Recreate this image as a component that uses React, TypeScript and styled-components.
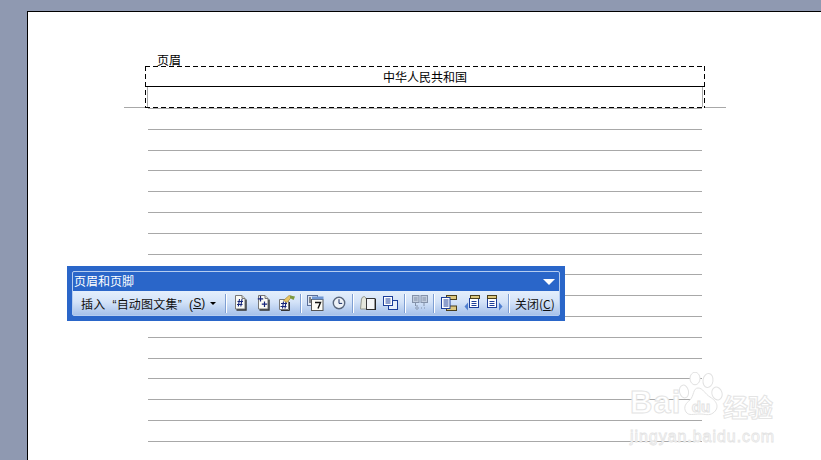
import React from "react";
import styled, { createGlobalStyle } from "styled-components";

const GlobalStyle = createGlobalStyle`
  html, body {
    margin: 0;
    padding: 0;
    background: #8f99b1;
    overflow: hidden;
  }
`;

const Screen = styled.div`
  position: relative;
  width: 821px;
  height: 460px;
  padding-top: 11px;
  box-sizing: border-box;
  overflow: hidden;
  font-family: "Noto Sans CJK SC", "Liberation Sans", sans-serif;
`;

const Page = styled.div`
  margin-left: 27px;
  height: 449px;
  background: #fff;
  border-top: 1px solid #000;
  border-left: 1px solid #000;
  box-sizing: border-box;
  padding: 54px 0 0 117px;
  overflow: hidden;
`;

const dash = "#000 0 5px, transparent 5px 8px";

const HeaderBox = styled.div`
  position: relative;
  width: 560px;
  height: 42px;
  box-sizing: border-box;
  padding-top: 3px;
  background:
    repeating-linear-gradient(90deg, ${dash}) top left / 100% 1px no-repeat,
    repeating-linear-gradient(90deg, ${dash}) bottom left / 100% 1px no-repeat,
    repeating-linear-gradient(180deg, ${dash}) top left / 1px 100% no-repeat,
    repeating-linear-gradient(180deg, ${dash}) top right / 1px 100% no-repeat;

  &::before,
  &::after {
    content: "";
    position: absolute;
    bottom: 0;
    width: 21px;
    height: 1px;
    background: #a8a8a8;
  }
  &::before {
    left: -21px;
  }
  &::after {
    right: -21px;
  }
`;

const HeaderTag = styled.span`
  position: absolute;
  left: 10px;
  top: -13px;
  padding: 0 2px;
  height: 14px;
  font-size: 12px;
  line-height: 14px;
  color: #000;
`;

const HeaderText = styled.div`
  height: 17px;
  font-size: 12px;
  line-height: 15px;
  color: #000;
  text-align: center;
`;

const HeaderBody = styled.div`
  height: 21px;
  margin: 0 0 0 1px;
  border-top: 1px solid #000;
  box-sizing: border-box;
  background:
    linear-gradient(#a8a8a8, #a8a8a8) 1px 0 / 1px 100% no-repeat,
    linear-gradient(#a8a8a8, #a8a8a8) calc(100% - 2px) 0 / 1px 100% no-repeat;
`;

const TextLines = styled.div`
  margin-left: 3px;
  width: 554px;
`;

const TextLine = styled.div<{ $first?: boolean }>`
  height: ${(p) => (p.$first ? "1px" : "20.8px")};
  box-sizing: border-box;
  border-bottom: 1px solid #a8a8a8;
`;

const Toolbar = styled.div`
  position: absolute;
  left: 67px;
  top: 266px;
  width: 498px;
  height: 55px;
  box-sizing: border-box;
  padding: 5px;
  background: #2a66c9;
`;

const ToolbarInner = styled.div`
  height: 100%;
  box-sizing: border-box;
  border: 1px solid #b5cdf0;
  border-radius: 2px;
  display: flex;
  flex-direction: column;
`;

const TitleBar = styled.div`
  height: 19px;
  padding: 0 4px 2px 1px;
  box-sizing: border-box;
  display: flex;
  align-items: center;
  justify-content: space-between;
  color: #fff;
  font-size: 12px;
  line-height: 17px;
`;

const TitleArrow = styled.span`
  width: 0;
  height: 0;
  margin-top: 2px;
  border-left: 6px solid transparent;
  border-right: 6px solid transparent;
  border-top: 6px solid #fff;
`;

const ToolRow = styled.div`
  flex: 1;
  display: flex;
  align-items: center;
  padding-left: 8px;
  color: #111;
  font-size: 12px;
  background: linear-gradient(#e4effc 0%, #d4e3f8 45%, #a6c1ea 100%);
`;

const InsertMenu = styled.div`
  width: 142px;
  display: flex;
  align-items: center;
  white-space: pre;
  letter-spacing: 0.2px;
  font-family: "Liberation Sans", "Noto Sans CJK SC", sans-serif;
`;

const MenuCaret = styled.span`
  width: 0;
  height: 0;
  margin-left: 4px;
  border-left: 3px solid transparent;
  border-right: 3px solid transparent;
  border-top: 3px solid #000;
`;

const Key = styled.span`
  text-decoration: underline;
`;

const Sep = styled.span`
  width: 1px;
  height: 19px;
  margin: 0 3px 0 2px;
  background: #7e9fd3;
  box-shadow: 1px 0 0 #fff;
`;

const ToolButton = styled.span`
  width: 23px;
  height: 22px;
  display: flex;
  align-items: center;
  justify-content: center;
`;

const CloseLabel = styled.span`
  margin-left: 3px;
  white-space: nowrap;
`;

const Watermark = styled.div`
  position: absolute;
  left: 630px;
  top: 372px;
  width: 150px;
  height: 72px;
  pointer-events: none;
`;

const WmPaw = styled.svg`
  position: absolute;
  left: 47px;
  top: 0;
`;

const WmBai = styled.span`
  position: absolute;
  left: 0;
  top: 14px;
  font: bold 31px/34px "Liberation Sans", sans-serif;
  letter-spacing: 1px;
  color: #fff;
  -webkit-text-stroke: 1px #e4e4e4;
`;

const WmCn = styled.span`
  position: absolute;
  left: 93px;
  top: 20px;
  font: bold 25px/28px "Noto Sans CJK SC", sans-serif;
  color: #fff;
  -webkit-text-stroke: 1px #e4e4e4;
  white-space: nowrap;
`;

const WmUrl = styled.span`
  position: absolute;
  left: 0;
  top: 56px;
  font: 16px/18px "Liberation Sans", sans-serif;
  letter-spacing: 0.95px;
  color: #fff;
  -webkit-text-stroke: 0.8px #e4e4e4;
  white-space: nowrap;
`;

const navy = "#16257a";
const blue = "#1d3f9a";
const gold = "#dcc77e";
const brown = "#4a3f1c";

function PageIcon({ children }: { children?: React.ReactNode }) {
  return (
    <svg width="13" height="16" viewBox="0 0 13 16">
      <path d="M1.5 .5h6.5l3 3v10.5h-9.5z" fill="#fbfbf5" stroke="#777" />
      <path d="M8 .5v3h3" fill="#d8d8d0" stroke="#777" />
      <path d="M12 4.5V15H2.5" fill="none" stroke="#333" strokeWidth="1.4" />
      {children}
    </svg>
  );
}

function PageNumberIcon() {
  return (
    <PageIcon>
      <path d="M5.5 4l-1.2 7.5M8 4l-1.2 7.5M3.5 6.5h5.5M3 9.5h5.5" stroke={navy} strokeWidth="1.1" fill="none" />
    </PageIcon>
  );
}

function PageCountIcon() {
  return (
    <PageIcon>
      <path d="M3.5 1v5.5M.8 3.8h5.4M7.5 6.5v5.5M4.8 9.2h5.4" stroke={navy} strokeWidth="1.2" fill="none" />
    </PageIcon>
  );
}

function PageFormatIcon() {
  return (
    <svg width="16" height="16" viewBox="0 0 16 16">
      <path d="M.5 4.5h7l2 2v8h-9z" fill="#fbfbf5" stroke="#777" />
      <path d="M10.5 7v8.5H2" fill="none" stroke="#333" />
      <path d="M4.5 6.5l-1 7M7 6.5l-1 7M2 8.5h6M1.5 11.5h6" stroke={navy} strokeWidth="1.1" fill="none" />
      <path d="M4.5 5.5L10 .5l3 1-5 6z" fill="#e8c562" stroke="#9a7c28" strokeWidth=".6" />
      <path d="M11 .5l5 1-1.5 3.5-3.5-2z" fill="#7d9a3f" />
    </svg>
  );
}

function DateIcon() {
  return (
    <svg width="17" height="16" viewBox="0 0 17 16">
      <rect x="0.5" y="0.5" width="10" height="10" fill="#dfe7f4" stroke="#5a6f99" />
      <path d="M2 3h2M2 5h2M2 7h2" stroke="#222" />
      <rect x="4.5" y="4.5" width="11.5" height="11" fill="#fbfbf6" stroke="#555" />
      <rect x="5" y="1.5" width="11.5" height="3" fill="#6f97d4" />
      <path d="M8 7.5h5.5L11 13.5" fill="none" stroke="#111" strokeWidth="1.4" />
    </svg>
  );
}

function ClockIcon() {
  return (
    <svg width="14" height="14" viewBox="0 0 14 14">
      <circle cx="7" cy="7" r="5.7" fill="#eef2f7" stroke="#59677d" strokeWidth="1.4" />
      <path d="M7 3.2V7.4H10.2" fill="none" stroke="#1a2e66" />
    </svg>
  );
}

function BookIcon() {
  return (
    <svg width="16" height="14" viewBox="0 0 16 14">
      <path d="M.5 13l1-10q.5-2.5 3-2.5L6.5 3v10z" fill="#e6e8dd" stroke="#94988c" />
      <rect x="6.5" y="2.5" width="8.5" height="11" fill="#f4f6f8" stroke="#3a3a3a" />
      <path d="M15.5 3v11H7" fill="none" stroke="#222" />
    </svg>
  );
}

function SwitchIcon() {
  return (
    <svg width="15" height="14" viewBox="0 0 15 14">
      <rect x="5.5" y="4.5" width="9" height="9" fill="#e8f0fb" stroke={blue} />
      <rect x="0.5" y="0.5" width="9" height="9" fill="#fff" stroke={blue} />
      <path d="M2.5 3h5M2.5 5h5M2.5 7h5" stroke={blue} />
    </svg>
  );
}

function LinkPrevIcon() {
  return (
    <svg width="16" height="16" viewBox="0 0 16 16">
      <rect x="0.5" y="0.5" width="6.5" height="7" fill="#c2cddd" stroke="#8492aa" />
      <rect x="9" y="0.5" width="6.5" height="7" fill="#c2cddd" stroke="#8492aa" />
      <path d="M2 3h3.5M2 5h3.5M10.5 3H14M10.5 5H14" stroke="#8492aa" />
      <path d="M3.5 8v3M12 8v3M3 13h1M6 13h1M9 13h1M12 13h1M5 10v5" stroke="#8492aa" fill="none" />
    </svg>
  );
}

function HeaderFooterIcon() {
  return (
    <svg width="16" height="16" viewBox="0 0 16 16">
      <rect x="5.5" y="0.5" width="10" height="4" fill={gold} stroke={brown} />
      <rect x="5.5" y="11" width="10" height="4.5" fill={gold} stroke={brown} />
      <rect x="0.5" y="2.5" width="8.5" height="11" fill="#fff" stroke={blue} />
      <path d="M2.5 5h5M2.5 7h5M2.5 9h5M2.5 11h5" stroke={blue} />
    </svg>
  );
}

function PrevSectionIcon() {
  return (
    <svg width="16" height="16" viewBox="0 0 16 16">
      <path d="M4 7.5v8L.5 11.5z" fill="#4f7fd0" />
      <rect x="5.5" y="3.5" width="9" height="9" fill="#fff" stroke={blue} />
      <path d="M7.5 6.5h5M7.5 8.5h5M7.5 10.5h5" stroke={blue} />
      <rect x="6.5" y="0.5" width="9" height="3" fill={gold} stroke={brown} />
    </svg>
  );
}

function NextSectionIcon() {
  return (
    <svg width="16" height="16" viewBox="0 0 16 16">
      <path d="M12 7.5v8l3.5-4z" fill="#4f7fd0" />
      <rect x="0.5" y="3.5" width="9" height="9" fill="#fff" stroke={blue} />
      <path d="M2.5 6.5h5M2.5 8.5h5M2.5 10.5h5" stroke={blue} />
      <rect x="0.5" y="0.5" width="9" height="3" fill={gold} stroke={brown} />
    </svg>
  );
}

function PawMark() {
  return (
    <WmPaw width="46" height="44" viewBox="0 0 46 44" fill="#fff" stroke="#e2e2e2">
      <ellipse cx="7" cy="19.5" rx="4.5" ry="6.5" transform="rotate(-12 7 19.5)" />
      <ellipse cx="18" cy="6.5" rx="5" ry="6.3" />
      <ellipse cx="31" cy="8.5" rx="5" ry="7" transform="rotate(8 31 8.5)" />
      <ellipse cx="40" cy="21.5" rx="5" ry="6.5" transform="rotate(-18 40 21.5)" />
      <path d="M21 16c5 0 7 6 12 9 7 4 10 11 3 16-4 3-8 1-13 1-7 0-11 2-14-2-3-5 0-9 4-12 4-4 3-12 8-12z" />
      <text
        x="24"
        y="40"
        textAnchor="middle"
        fontFamily="Liberation Sans, sans-serif"
        fontWeight="bold"
        fontSize="15"
      >
        du
      </text>
    </WmPaw>
  );
}

export default function App() {
  const lines = Array.from({ length: 17 }, (_, i) => i);
  return (
    <Screen>
      <GlobalStyle />
      <Page>
        <HeaderBox>
          <HeaderTag>页眉</HeaderTag>
          <HeaderText>中华人民共和国</HeaderText>
          <HeaderBody />
        </HeaderBox>
        <TextLines>
          {lines.map((i) => (
            <TextLine key={i} $first={i === 0} />
          ))}
        </TextLines>
      </Page>

      <Toolbar>
        <ToolbarInner>
          <TitleBar>
            <span>页眉和页脚</span>
            <TitleArrow />
          </TitleBar>
          <ToolRow>
            <InsertMenu>
              插入  “自动图文集”  (<Key>S</Key>)
              <MenuCaret />
            </InsertMenu>
            <Sep />
            <ToolButton><PageNumberIcon /></ToolButton>
            <ToolButton><PageCountIcon /></ToolButton>
            <ToolButton><PageFormatIcon /></ToolButton>
            <Sep />
            <ToolButton><DateIcon /></ToolButton>
            <ToolButton><ClockIcon /></ToolButton>
            <Sep />
            <ToolButton><BookIcon /></ToolButton>
            <ToolButton><SwitchIcon /></ToolButton>
            <Sep />
            <ToolButton><LinkPrevIcon /></ToolButton>
            <Sep />
            <ToolButton><HeaderFooterIcon /></ToolButton>
            <ToolButton><PrevSectionIcon /></ToolButton>
            <ToolButton><NextSectionIcon /></ToolButton>
            <Sep />
            <CloseLabel>关闭(<Key>C</Key>)</CloseLabel>
          </ToolRow>
        </ToolbarInner>
      </Toolbar>

      <Watermark>
        <WmBai>Bai</WmBai>
        <PawMark />
        <WmCn>经验</WmCn>
        <WmUrl>jingyan.baidu.com</WmUrl>
      </Watermark>
    </Screen>
  );
}
